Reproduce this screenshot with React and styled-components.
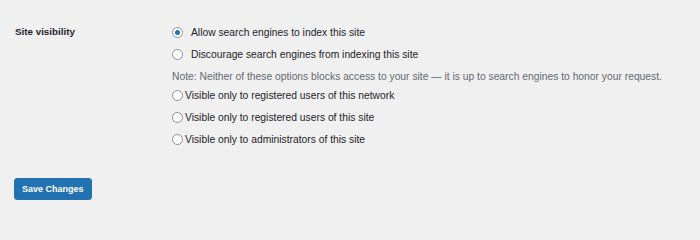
import React, { useState } from 'react';
import styled, { createGlobalStyle } from 'styled-components';

const GlobalStyle = createGlobalStyle`
  html, body {
    margin: 0;
    padding: 0;
    background: #f0f0f1;
  }
  body {
    font-family: "Liberation Sans", Arial, sans-serif;
    color: #1d2327;
    font-size: 10.3px;
  }
`;

const Page = styled.div`
  padding: 22px 0 0 15px;
  width: 700px;
  height: 218px;
  box-sizing: border-box;
  overflow: hidden;
`;

const SettingRow = styled.div`
  display: grid;
  grid-template-columns: 157px 1fr;
`;

const Label = styled.div`
  font-weight: 700;
  font-size: 9.8px;
  line-height: 20px;
`;

const Fieldset = styled.fieldset`
  border: 0;
  margin: 0;
  padding: 0;
  display: flex;
  flex-direction: column;
`;

const Option = styled.label`
  display: flex;
  align-items: center;
  gap: ${({ $wide }) => ($wide ? '8px' : '2px')};
  height: 20px;
  margin-bottom: ${({ $last }) => ($last ? '0' : '2px')};
  cursor: pointer;
`;

const Radio = styled.span`
  width: 11px;
  height: 11px;
  box-sizing: border-box;
  border-radius: 50%;
  border: 1px solid #8c8f94;
  background: #fff;
  display: flex;
  align-items: center;
  justify-content: center;
  flex-shrink: 0;

  &::after {
    content: '';
    width: 5px;
    height: 5px;
    border-radius: 50%;
    background: ${({ $checked }) => ($checked ? '#2271b1' : 'transparent')};
  }
`;

const Note = styled.p`
  margin: 3px 0 0;
  color: #646970;
  line-height: 16px;
`;

const Submit = styled.div`
  margin-top: 29px;
`;

const Button = styled.button`
  font-family: inherit;
  font-size: 9px;
  font-weight: 700;
  color: #fff;
  background: #2271b1;
  border: 1px solid #2271b1;
  border-radius: 3px;
  height: 22px;
  padding: 0 7px;
  margin-left: -1px;
  cursor: pointer;
`;

const topOptions = [
  'Allow search engines to index this site',
  'Discourage search engines from indexing this site',
];

const bottomOptions = [
  'Visible only to registered users of this network',
  'Visible only to registered users of this site',
  'Visible only to administrators of this site',
];

export default function App() {
  const [selected, setSelected] = useState(0);

  return (
    <>
      <GlobalStyle />
      <Page>
        <SettingRow>
          <Label>Site visibility</Label>
          <Fieldset>
            {topOptions.map((text, i) => (
              <Option key={text} $wide onClick={() => setSelected(i)}>
                <Radio $checked={selected === i} />
                {text}
              </Option>
            ))}
            <Note>
              Note: Neither of these options blocks access to your site — it is
              up to search engines to honor your request.
            </Note>
            {bottomOptions.map((text, i) => (
              <Option
                key={text}
                $last={i === bottomOptions.length - 1}
                onClick={() => setSelected(i + 2)}
              >
                <Radio $checked={selected === i + 2} />
                {text}
              </Option>
            ))}
          </Fieldset>
        </SettingRow>
        <Submit>
          <Button type="button">Save Changes</Button>
        </Submit>
      </Page>
    </>
  );
}
